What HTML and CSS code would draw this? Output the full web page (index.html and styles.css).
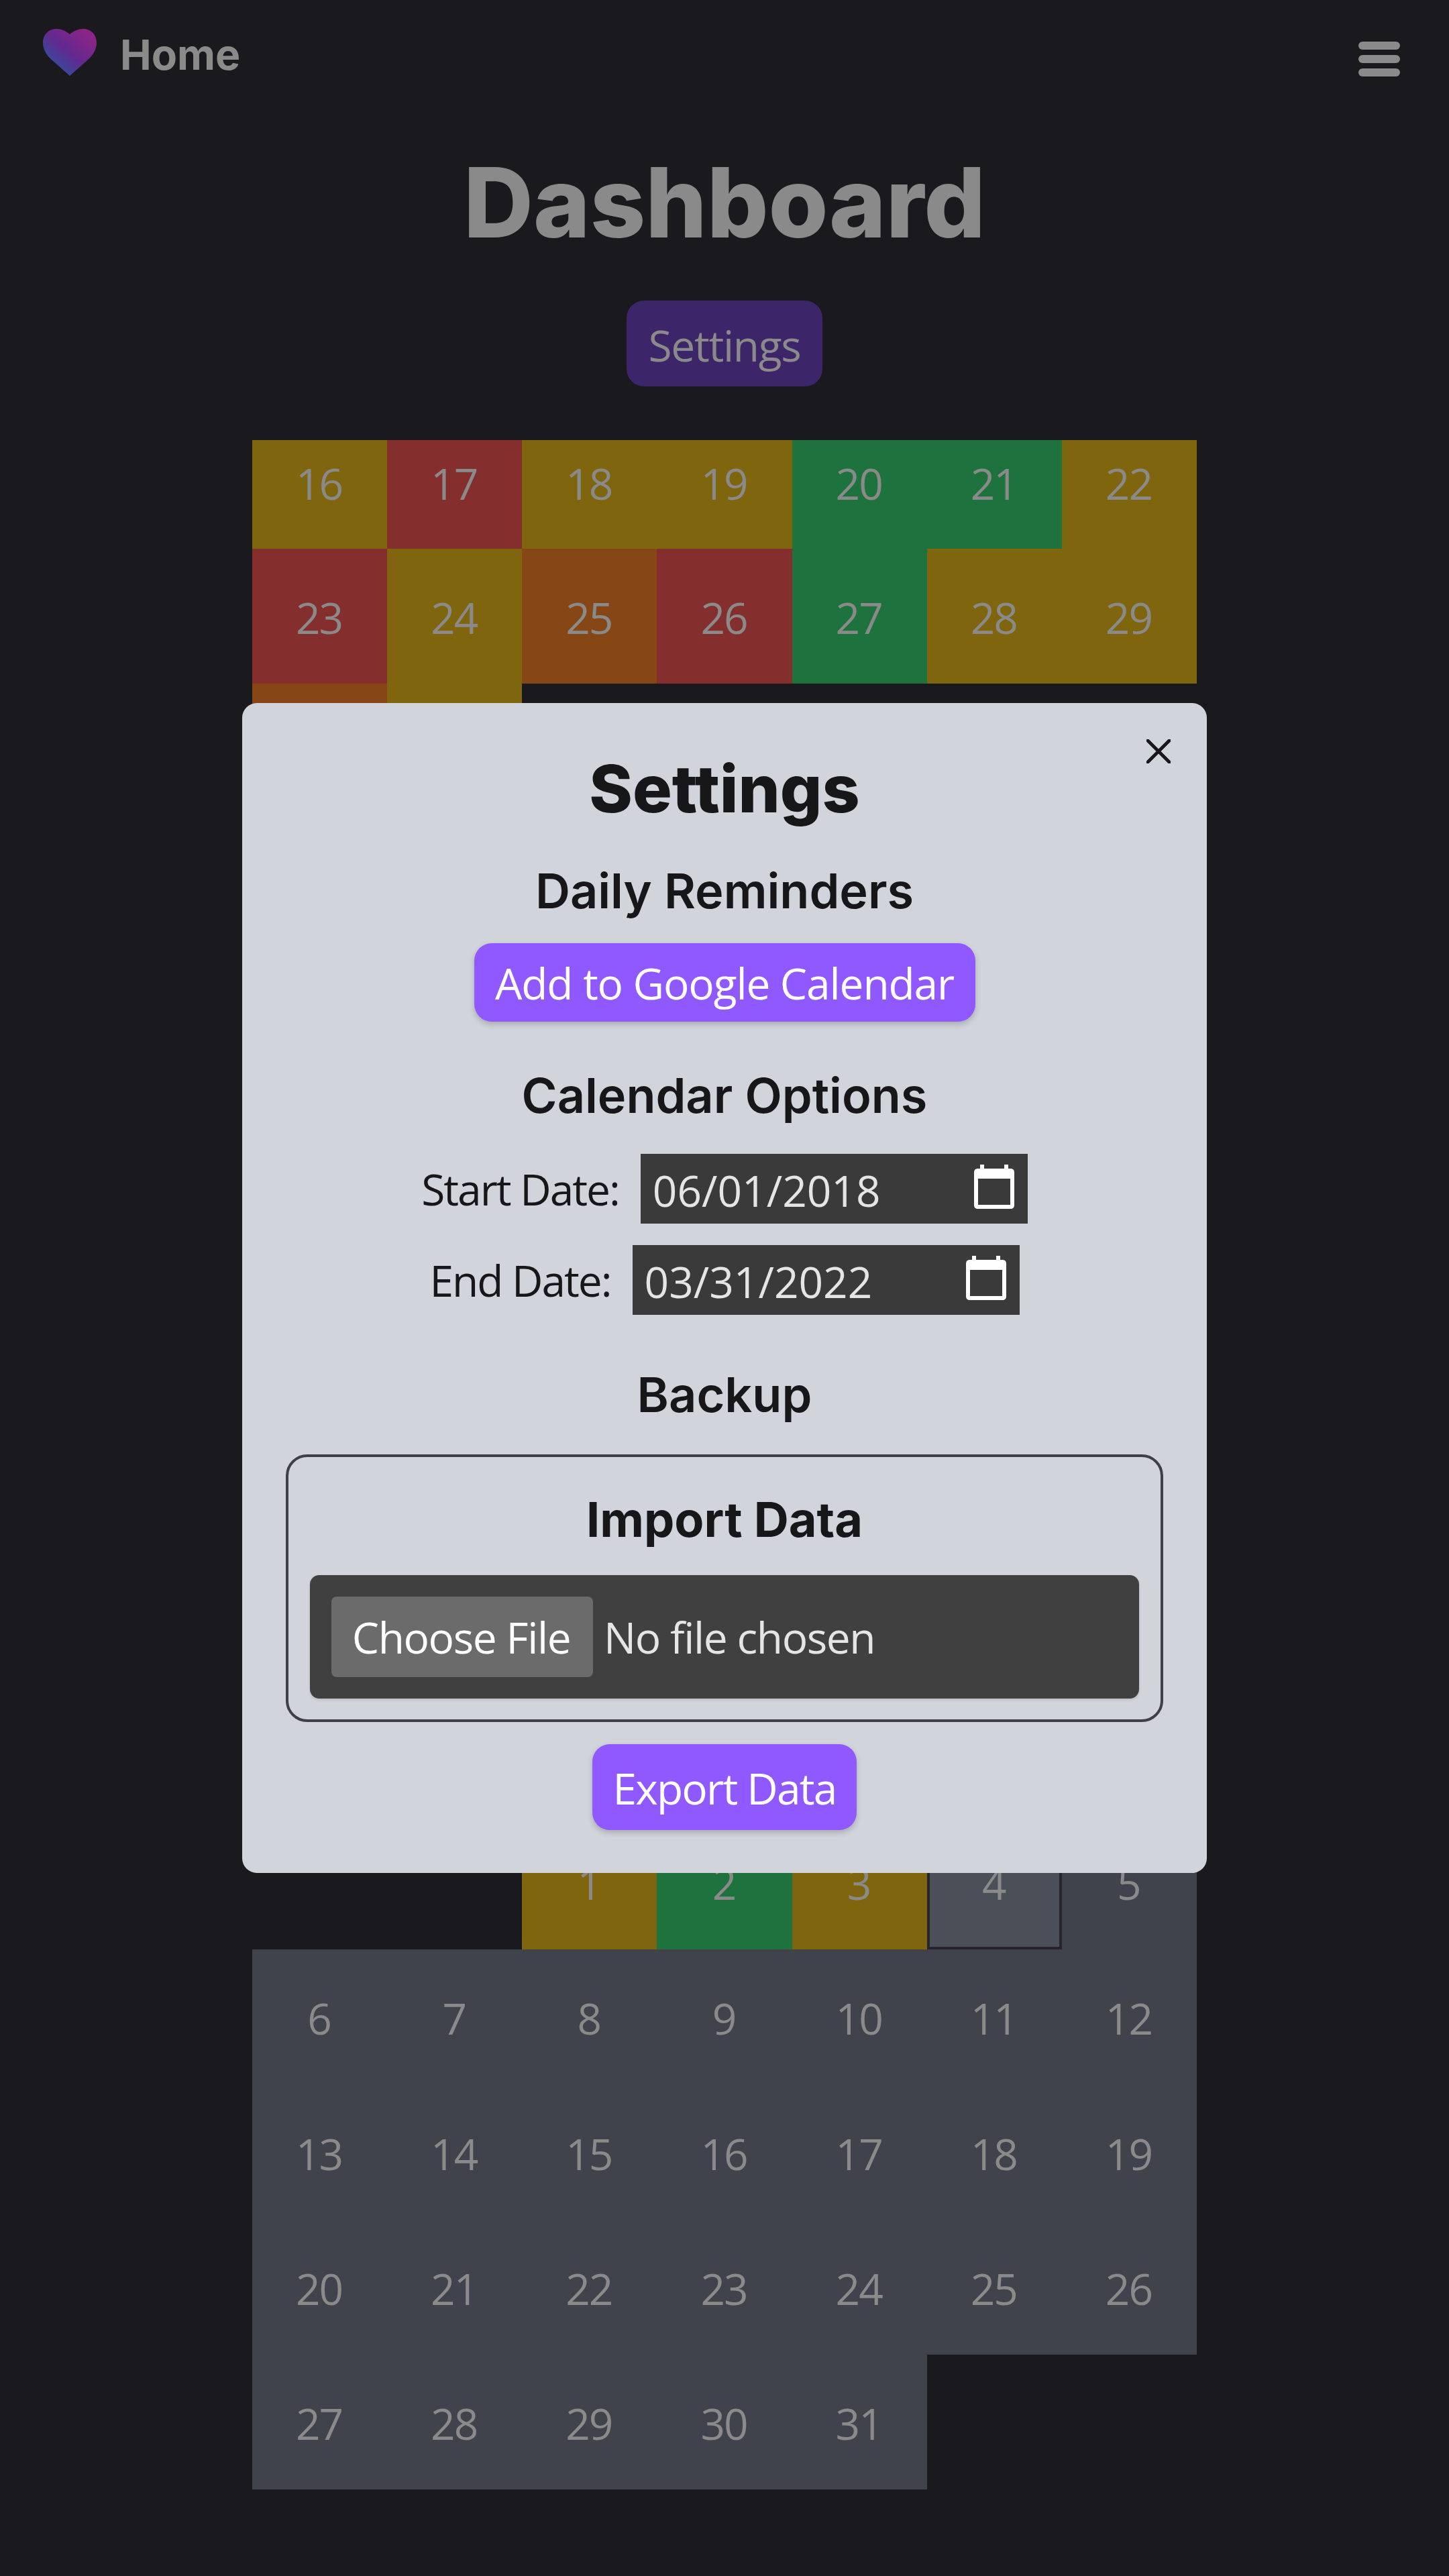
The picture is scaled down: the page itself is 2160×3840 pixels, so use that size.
FILE: index.html
```html
<!DOCTYPE html>
<html lang="en">
<head>
<meta charset="utf-8">
<title>Dashboard</title>
<link rel="stylesheet" href="styles.css">
</head>
<body>
<nav class="navbar">
  <a class="brand" href="#">
    <svg class="brand-heart" viewBox="0 0 80 70">
      <defs>
        <linearGradient id="heartFill" x1="0" y1="1" x2="1" y2="0">
          <stop offset="0.15" stop-color="#2f51a0"/>
          <stop offset="0.5" stop-color="#62298f"/>
          <stop offset="0.85" stop-color="#8a2488"/>
        </linearGradient>
      </defs>
      <path fill="url(#heartFill)" d="M40 8C34 3 27 0 20 0C8 0 0 9 0 21C0 32 7 41 14 47L40 70L66 47C73 41 80 32 80 21C80 9 72 0 60 0C53 0 46 3 40 8Z"/>
    </svg>
    <span>Home</span>
  </a>
  <button class="menu-btn" aria-label="Menu"><span></span><span></span><span></span></button>
</nav>

<main class="dashboard">
  <h1>Dashboard</h1>
  <button class="settings-btn">Settings</button>

  <section class="month month-top">
    <div class="day short ok">16</div>
    <div class="day short bad">17</div>
    <div class="day short ok">18</div>
    <div class="day short ok">19</div>
    <div class="day short good">20</div>
    <div class="day short good">21</div>
    <div class="day short ok">22</div>
    <div class="day bad">23</div>
    <div class="day ok">24</div>
    <div class="day poor">25</div>
    <div class="day bad">26</div>
    <div class="day good">27</div>
    <div class="day ok">28</div>
    <div class="day ok">29</div>
    <div class="day poor"></div>
    <div class="day ok"></div>
  </section>

  <section class="month month-bottom">
    <div class="day blank"></div>
    <div class="day blank"></div>
    <div class="day ok">1</div>
    <div class="day good">2</div>
    <div class="day ok">3</div>
    <div class="day today">4</div>
    <div class="day future">5</div>
    <div class="day future">6</div>
    <div class="day future">7</div>
    <div class="day future">8</div>
    <div class="day future">9</div>
    <div class="day future">10</div>
    <div class="day future">11</div>
    <div class="day future">12</div>
    <div class="day future">13</div>
    <div class="day future">14</div>
    <div class="day future">15</div>
    <div class="day future">16</div>
    <div class="day future">17</div>
    <div class="day future">18</div>
    <div class="day future">19</div>
    <div class="day future">20</div>
    <div class="day future">21</div>
    <div class="day future">22</div>
    <div class="day future">23</div>
    <div class="day future">24</div>
    <div class="day future">25</div>
    <div class="day future">26</div>
    <div class="day future">27</div>
    <div class="day future">28</div>
    <div class="day future">29</div>
    <div class="day future">30</div>
    <div class="day future">31</div>
  </section>
</main>

<div class="modal-wrap">
  <div class="modal">
    <button class="modal-close" aria-label="Close">
      <svg viewBox="0 0 36 36"><path d="M2 2L34 34M34 2L2 34"/></svg>
    </button>
    <h2>Settings</h2>

    <h3 class="reminders-title">Daily Reminders</h3>
    <button class="btn btn-add">Add to Google Calendar</button>

    <h3 class="options-title">Calendar Options</h3>
    <div class="date-row first-date">
      <label>Start Date:</label>
      <div class="date-input">
        <span>06/01/2018</span>
        <svg viewBox="0 0 60 66"><path fill-rule="evenodd" d="M9 0H15V6H45V0H51V6H54C58 6 60 8 60 12V60C60 64 58 66 54 66H6C2 66 0 64 0 60V12C0 8 2 6 6 6H9ZM6 21V60H54V21Z"/></svg>
      </div>
    </div>
    <div class="date-row">
      <label>End Date:</label>
      <div class="date-input">
        <span>03/31/2022</span>
        <svg viewBox="0 0 60 66"><path fill-rule="evenodd" d="M9 0H15V6H45V0H51V6H54C58 6 60 8 60 12V60C60 64 58 66 54 66H6C2 66 0 64 0 60V12C0 8 2 6 6 6H9ZM6 21V60H54V21Z"/></svg>
      </div>
    </div>

    <h3 class="backup-title">Backup</h3>
    <div class="import-box">
      <h4>Import Data</h4>
      <div class="file-input">
        <span class="file-btn">Choose File</span>
        <span class="file-name">No file chosen</span>
      </div>
    </div>
    <button class="btn btn-export">Export Data</button>
  </div>
</div>
</body>
</html>
```

FILE: styles.css
```css
* { box-sizing: border-box; }

html, body { margin: 0; padding: 0; }

body {
  min-height: 3840px;
  background: #1a191e;
  color: #8a8a8a;
  font-family: "Open Sans", "Noto Sans", sans-serif;
}

button { font-family: inherit; border: none; padding: 0; }

/* navbar */
.navbar {
  display: flex;
  justify-content: space-between;
  padding: 43px 73px 0 64px;
  height: 160px;
}
.brand {
  display: flex;
  align-items: flex-start;
  gap: 35px;
  color: #8a8a8a;
  font-family: Inter, sans-serif;
  font-size: 62.5px;
  font-weight: 700;
  line-height: 70px;
  text-decoration: none;
}
.brand-heart { width: 80px; height: 70px; }
.brand span { margin-top: 3px; }
.menu-btn {
  display: flex;
  flex-direction: column;
  gap: 8.5px;
  width: 62px;
  margin-top: 19px;
  background: none;
}
.menu-btn span { display: block; height: 11.5px; border-radius: 6px; background: #8a8a8a; }

/* dashboard */
.dashboard { display: flex; flex-direction: column; align-items: center; }
.dashboard h1 {
  margin: 70px 0 0;
  font-family: Inter, sans-serif;
  font-size: 144px;
  font-weight: 800;
  line-height: 144px;
  color: #8a8a8a;
}
.settings-btn {
  width: 292px;
  height: 128px;
  margin-top: 74px;
  padding-top: 4px;
  border-radius: 26px;
  background: #3d2569;
  color: #8a8a8a;
  font-size: 64px;
  letter-spacing: -1.3px;
}

/* calendar */
.month {
  display: grid;
  grid-template-columns: repeat(7, 1fr);
  width: 1408px;
  font-size: 64px;
  letter-spacing: -2px;
}
.month-top { margin-top: 80px; }
.month-bottom { margin-top: 1485px; }
.day { display: flex; align-items: center; justify-content: center; height: 201.14px; padding: 4px 2px 0 0; }
.day.short { height: 162px; padding-top: 0; padding-bottom: 34px; }
.ok { background: #7f650e; }
.bad { background: #852e2e; }
.good { background: #1d723d; }
.poor { background: #874615; }
.future { background: #40434b; }
.today { background: #4b4f58; border: 4px solid #26262a; }

/* settings modal */
.modal-wrap {
  position: fixed;
  inset: 0;
  display: flex;
  align-items: center;
  justify-content: center;
}
.modal {
  position: relative;
  display: flex;
  flex-direction: column;
  align-items: center;
  width: 1438px;
  height: 1744px;
  padding: 72px 64px 0;
  border-radius: 22px;
  background: #d1d5db;
  color: #17171a;
}
.modal-close {
  position: absolute;
  top: 54px;
  right: 54px;
  width: 36px;
  height: 36px;
  background: none;
}
.modal-close svg { display: block; }
.modal-close path { fill: none; stroke: #17171a; stroke-width: 5; stroke-linecap: round; }

.modal h2, .modal h3, .modal h4 { margin: 0; font-family: Inter, sans-serif; }
.modal h2 { font-size: 98px; font-weight: 800; line-height: 112px; }
.modal h3 { font-size: 72px; font-weight: 600; line-height: 84px; }
.modal h4 { font-size: 72px; font-weight: 700; line-height: 84px; }
.modal .reminders-title { margin-top: 54px; }
.modal .options-title { margin-top: 68px; }
.modal .backup-title { margin-top: 77px; }

.btn {
  padding-top: 2px;
  background: #9059ff;
  color: #fff;
  font-size: 64px;
  border-radius: 26px;
  box-shadow: 0 4px 8px rgba(0, 0, 0, .2);
}
.btn-add { width: 747px; height: 117px; margin-top: 36px; letter-spacing: -1.1px; }
.btn-export { width: 394px; height: 128px; margin-top: 33px; letter-spacing: -1.8px; }

.date-row { display: flex; align-items: center; gap: 32px; height: 104px; margin-top: 32px; font-size: 64px; }
.date-row.first-date { margin-top: 45px; }
.date-row label { color: #17171a; letter-spacing: -2px; }
.date-input {
  display: flex;
  align-items: center;
  justify-content: space-between;
  width: 577px;
  height: 104px;
  padding: 0 20px 0 18px;
  background: #3a3a3a;
  color: #e5e5e5;
}
.date-input span { padding-top: 4px; }
.date-input svg { width: 60px; height: 66px; margin-top: -6px; fill: #fff; }

.import-box {
  display: flex;
  flex-direction: column;
  align-items: center;
  width: 1308px;
  height: 399px;
  margin-top: 47px;
  padding: 51px 32px 0;
  border: 4px solid #3f3f46;
  border-radius: 32px;
}
.file-input {
  display: flex;
  align-items: center;
  gap: 16px;
  width: 100%;
  height: 184px;
  margin-top: 41px;
  padding: 0 32px;
  border-radius: 14px;
  background: #404040;
  box-shadow: 0 2px 4px rgba(0, 0, 0, .12);
  color: #e5e5e5;
  font-size: 64px;
  letter-spacing: -1.4px;
}
.file-btn {
  display: flex;
  align-items: center;
  justify-content: center;
  width: 390px;
  height: 120px;
  padding-right: 3px;
  border-radius: 8px;
  background: #6b6b6b;
  color: #fff;
}
```
